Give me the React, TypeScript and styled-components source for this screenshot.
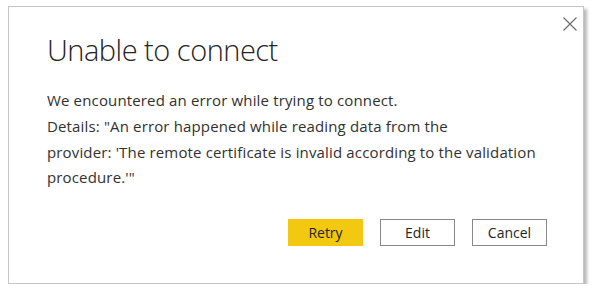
import styled, { createGlobalStyle } from "styled-components";

const GlobalStyle = createGlobalStyle`
  body {
    margin: 0;
    background: #ffffff;
    font-family: "Segoe UI", "Open Sans", "Noto Sans", sans-serif;
  }
`;

interface ActionButtonProps {
  $primary?: boolean;
}

export default function App() {
  return (
    <>
      <GlobalStyle />
      <Dialog>
        <Header>
          <Title>Unable to connect</Title>
          <CloseButton aria-label="Close">
            <svg width="14" height="14" viewBox="0 0 14 14">
              <path d="M0.5 0.5 L13.5 13.5 M13.5 0.5 L0.5 13.5" stroke="#6b6b6b" strokeWidth="1.1" fill="none" />
            </svg>
          </CloseButton>
        </Header>
        <Body>
          <Message>We encountered an error while trying to connect.</Message>
          <Message>
            Details: "An error happened while reading data from the
            <br />
            provider: 'The remote certificate is invalid according to the validation
            <br />
            procedure.'"
          </Message>
        </Body>
        <Footer>
          <ActionButton $primary>Retry</ActionButton>
          <ActionButton>Edit</ActionButton>
          <ActionButton>Cancel</ActionButton>
        </Footer>
      </Dialog>
    </>
  );
}

// Contenedor del diálogo
const Dialog = styled.div`
  box-sizing: border-box;
  margin: 6px 0 0 8px;
  width: 576px;
  height: 278px;
  border: 1px solid #c6c6c6;
  background: #ffffff;
  box-shadow: 3px 3px 3px rgba(0, 0, 0, 0.28);
  display: flex;
  flex-direction: column;
  padding: 0 36px 0 38px;
`;

const Header = styled.div`
  display: flex;
  justify-content: space-between;
  align-items: flex-start;
`;

const Title = styled.h1`
  margin: 23px 0 0 0;
  font-size: 29px;
  font-weight: 300;
  line-height: 40px;
  color: #252423;
  letter-spacing: -0.5px;
`;

const CloseButton = styled.button`
  margin: 10px -30px 0 0;
  border: none;
  background: transparent;
  padding: 0;
  width: 14px;
  height: 14px;
  display: flex;
`;

const Body = styled.div`
  margin-top: 18px;
  display: flex;
  flex-direction: column;
`;

const Message = styled.p`
  margin: 0;
  font-size: 15px;
  line-height: 25.8px;
  color: #323130;
  letter-spacing: 0.15px;
  white-space: nowrap;
`;

const Footer = styled.div`
  margin-top: 28px;
  display: flex;
  justify-content: flex-end;
  gap: 17px;
`;

const ActionButton = styled.button<ActionButtonProps>`
  box-sizing: border-box;
  width: 75px;
  height: 27px;
  font-family: inherit;
  font-size: 14px;
  color: #252423;
  background: ${(p) => (p.$primary ? "#f2c811" : "#ffffff")};
  border: 1px solid ${(p) => (p.$primary ? "#f2c811" : "#8a8886")};
  padding: 0;
`;
